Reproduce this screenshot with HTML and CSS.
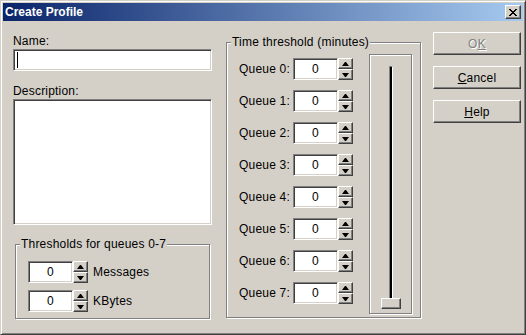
FILE: index.html
```html
<!DOCTYPE html>
<html lang="en">
<head>
    <meta charset="UTF-8">
    <title>Create Profile</title>
    <link rel="stylesheet" href="styles.css">
</head>
<body>
    <div class="window">
        <div class="titlebar">
            <span class="title">Create Profile</span>
            <span class="close-btn">
                <svg width="8" height="7" viewBox="0 0 8 7" shape-rendering="crispEdges">
                    <path d="M0 0h2v1H0z M6 0h2v1H6z M1 1h2v1H1z M5 1h2v1H5z M2 2h4v1H2z M3 3h2v1H3z M2 4h4v1H2z M1 5h2v1H1z M5 5h2v1H5z M0 6h2v1H0z M6 6h2v1H6z" fill="#000"/>
                </svg>
            </span>
        </div>

        <div class="content">
            <div class="left-col">
                <div class="field-label">Name:</div>
                <div class="edit name-edit"><span class="caret"></span></div>
                <div class="field-label desc-label">Description:</div>
                <div class="edit desc-edit"></div>

                <div class="group thresholds">
                    <div class="group-title">Thresholds for queues 0-7</div>
                    <div class="spin-rows">
                        <div class="spin-row">
                            <div class="edit spin-edit">0</div>
                            <div class="spinner"><span class="spin-btn up"></span><span class="spin-btn down"></span></div>
                            <span class="unit">Messages</span>
                        </div>
                        <div class="spin-row">
                            <div class="edit spin-edit">0</div>
                            <div class="spinner"><span class="spin-btn up"></span><span class="spin-btn down"></span></div>
                            <span class="unit">KBytes</span>
                        </div>
                    </div>
                </div>
            </div>

            <div class="group time-group">
                <div class="group-title">Time threshold (minutes)</div>
                <div class="time-body">
                    <div class="queue-list">
                        <div class="spin-row">
                            <span class="queue-label">Queue 0:</span>
                            <div class="edit spin-edit">0</div>
                            <div class="spinner"><span class="spin-btn up"></span><span class="spin-btn down"></span></div>
                        </div>
                        <div class="spin-row">
                            <span class="queue-label">Queue 1:</span>
                            <div class="edit spin-edit">0</div>
                            <div class="spinner"><span class="spin-btn up"></span><span class="spin-btn down"></span></div>
                        </div>
                        <div class="spin-row">
                            <span class="queue-label">Queue 2:</span>
                            <div class="edit spin-edit">0</div>
                            <div class="spinner"><span class="spin-btn up"></span><span class="spin-btn down"></span></div>
                        </div>
                        <div class="spin-row">
                            <span class="queue-label">Queue 3:</span>
                            <div class="edit spin-edit">0</div>
                            <div class="spinner"><span class="spin-btn up"></span><span class="spin-btn down"></span></div>
                        </div>
                        <div class="spin-row">
                            <span class="queue-label">Queue 4:</span>
                            <div class="edit spin-edit">0</div>
                            <div class="spinner"><span class="spin-btn up"></span><span class="spin-btn down"></span></div>
                        </div>
                        <div class="spin-row">
                            <span class="queue-label">Queue 5:</span>
                            <div class="edit spin-edit">0</div>
                            <div class="spinner"><span class="spin-btn up"></span><span class="spin-btn down"></span></div>
                        </div>
                        <div class="spin-row">
                            <span class="queue-label">Queue 6:</span>
                            <div class="edit spin-edit">0</div>
                            <div class="spinner"><span class="spin-btn up"></span><span class="spin-btn down"></span></div>
                        </div>
                        <div class="spin-row">
                            <span class="queue-label">Queue 7:</span>
                            <div class="edit spin-edit">0</div>
                            <div class="spinner"><span class="spin-btn up"></span><span class="spin-btn down"></span></div>
                        </div>
                    </div>
                    <div class="slider-box">
                        <div class="track"></div>
                        <div class="thumb"></div>
                    </div>
                </div>
            </div>

            <div class="buttons">
                <div class="btn disabled">O<u>K</u></div>
                <div class="btn"><span><u>C</u>ancel</span></div>
                <div class="btn"><span><u>H</u>elp</span></div>
            </div>
        </div>
    </div>
</body>
</html>
```

FILE: styles.css
```css
/* Win2k style dialog */
body {
    margin: 0;
    font-family: "Liberation Sans", Arial, sans-serif;
    font-size: 12px;
    letter-spacing: 0.2px;
    color: #000;
    background-color: #d4d0c8;
}

.window {
    width: 526px;
    height: 335px;
    box-sizing: border-box;
    padding: 2px;
    background-color: #d4d0c8;
    border: 1px solid;
    border-color: #d4d0c8 #404040 #404040 #d4d0c8;
    box-shadow: inset 1px 1px #fff, inset -1px -1px #808080;
}

.titlebar {
    height: 18px;
    display: flex;
    align-items: center;
    padding-left: 2px;
    background: linear-gradient(to right, #0a246a, #a6caf0);
    color: #fff;
    font-weight: bold;
    letter-spacing: 0;
}

.title {
    flex: 1;
    line-height: 18px;
}

.close-btn {
    width: 16px;
    height: 14px;
    margin-right: 2px;
    box-sizing: border-box;
    display: flex;
    align-items: center;
    justify-content: center;
    background-color: #d4d0c8;
    border: 1px solid;
    border-color: #fff #404040 #404040 #fff;
    box-shadow: inset -1px -1px #808080;
}

.content {
    display: flex;
    align-items: flex-start;
    padding-left: 10px;
}

.left-col {
    width: 199px;
    padding-top: 13px;
}

.field-label {
    line-height: 14px;
    height: 14px;
}

.desc-label {
    margin-top: 13px;
}

.edit {
    box-sizing: border-box;
    background-color: #fff;
    border: 1px solid;
    border-color: #808080 #fff #fff #808080;
    box-shadow: inset 1px 1px #404040, inset -1px -1px #d4d0c8;
}

.name-edit {
    margin-top: 1px;
    height: 22px;
}

.caret {
    display: block;
    width: 1px;
    height: 16px;
    margin: 2px 0 0 3px;
    background-color: #000;
}

.desc-edit {
    margin-top: 1px;
    height: 126px;
}

.group {
    box-sizing: border-box;
    border: 1px solid #808080;
    box-shadow: inset 1px 1px #fff, 1px 1px #fff;
}

.group-title {
    width: fit-content;
    margin: -8px 0 0 4px;
    padding: 0 1px;
    line-height: 14px;
    background-color: #d4d0c8;
}

.thresholds {
    margin: 19px 2px 0;
}

.spin-rows {
    display: flex;
    flex-direction: column;
    gap: 7px;
    padding: 10px 0 6px 12px;
}

.spin-row {
    display: flex;
    align-items: center;
}

.spin-edit {
    width: 45px;
    height: 22px;
    line-height: 20px;
    text-align: center;
}

.spinner {
    display: flex;
    flex-direction: column;
}

.spin-btn {
    width: 15px;
    height: 11px;
    box-sizing: border-box;
    display: flex;
    align-items: center;
    justify-content: center;
    border: 1px solid;
    border-color: #fff #404040 #404040 #fff;
    box-shadow: inset -1px -1px #808080;
}

.spin-btn::after {
    content: "";
    width: 1px;
    height: 0;
    border-left: 3px solid transparent;
    border-right: 3px solid transparent;
}

.spin-btn.up::after {
    border-bottom: 4px solid #000;
}

.spin-btn.down::after {
    border-top: 4px solid #000;
}

.unit {
    margin-left: 5px;
}

.time-group {
    width: 195px;
    margin: 21px 0 0 14px;
}

.time-body {
    display: flex;
    align-items: flex-start;
    padding: 5px 0 3px 12px;
}

.queue-list {
    display: flex;
    flex-direction: column;
    gap: 10px;
    margin-top: 4px;
}

.queue-label {
    width: 54px;
    line-height: 22px;
}

.slider-box {
    width: 43px;
    height: 260px;
    margin-left: 16px;
    padding-top: 11px;
    box-sizing: border-box;
    border: 1px solid #808080;
    box-shadow: inset 1px 1px #fff, 1px 1px #fff;
}

.track {
    width: 2px;
    height: 235px;
    margin-left: 19px;
    background-color: #000;
    border-left: 1px solid #808080;
    border-top: 1px solid #808080;
    border-right: 1px solid #fff;
}

.thumb {
    width: 20px;
    height: 11px;
    margin: -4px 0 0 11px;
    box-sizing: border-box;
    background-color: #d4d0c8;
    border: 1px solid;
    border-color: #fff #404040 #404040 #fff;
    box-shadow: inset -1px -1px #808080;
}

.buttons {
    width: 88px;
    margin: 11px 0 0 12px;
    display: flex;
    flex-direction: column;
    gap: 11px;
}

.btn {
    height: 23px;
    box-sizing: border-box;
    display: flex;
    align-items: center;
    justify-content: center;
    padding-top: 1px;
    border: 1px solid;
    border-color: #fff #404040 #404040 #fff;
    box-shadow: inset -1px -1px #808080;
}

.btn.disabled {
    color: #808080;
    text-shadow: 1px 1px #fff;
}
```
